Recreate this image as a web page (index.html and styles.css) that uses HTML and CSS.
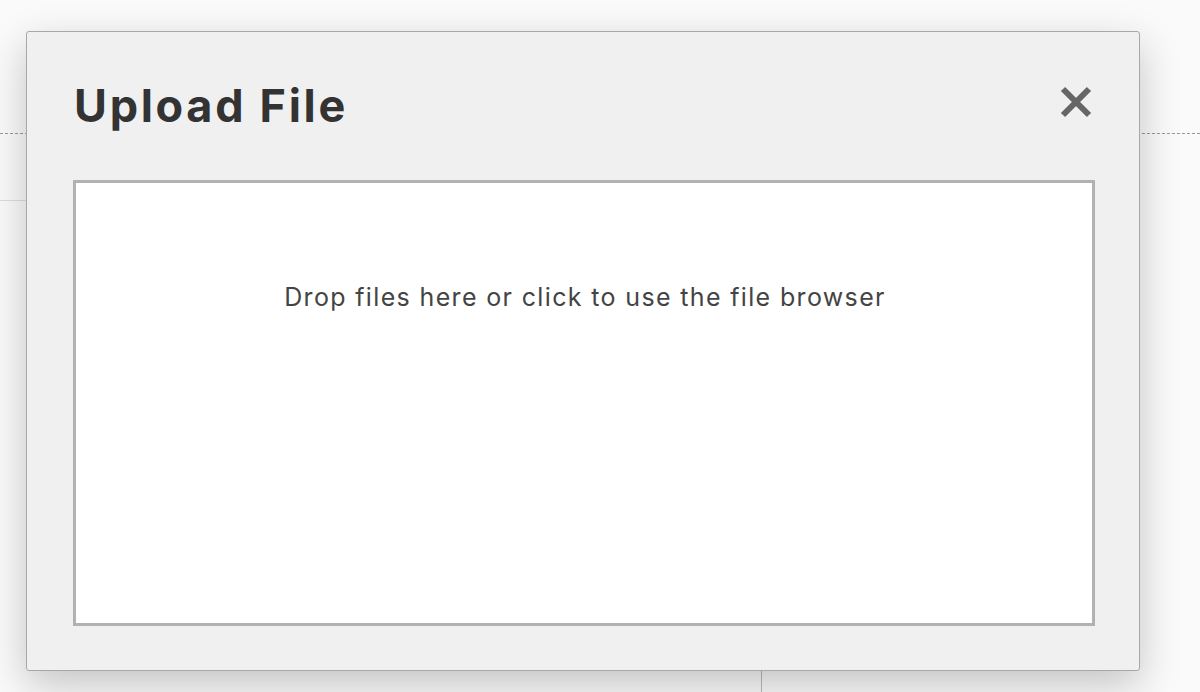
FILE: index.html
```html
<!DOCTYPE html>
<html>
<head>
<meta charset="utf-8">
<link rel="stylesheet" href="styles.css">
</head>
<body>
<div class="page">
  <div class="page-header"></div>
  <div class="page-toolbar"></div>
  <div class="page-columns">
    <div class="col-left"></div>
    <div class="col-right"></div>
  </div>
</div>
<div class="modal">
  <div class="modal-header">
    <h1 class="modal-title">Upload File</h1>
    <button class="modal-close" aria-label="Close">
      <svg width="34" height="34" viewBox="0 0 34 34"><path d="M4 4 L30 30 M30 4 L4 30" stroke="#666" stroke-width="6" stroke-linecap="butt" fill="none"/></svg>
    </button>
  </div>
  <div class="dropzone">
    <p class="dropzone-text">Drop files here or click to use the file browser</p>
  </div>
</div>
</body>
</html>
```

FILE: styles.css
```css
html, body {
  margin: 0;
  padding: 0;
}
body {
  background: #fafafa;
  width: 1200px;
  height: 692px;
  overflow: hidden;
  font-family: Inter, "Liberation Sans", sans-serif;
  position: relative;
}
.page-header {
  height: 134px;
  border-bottom: 1px dashed #999;
  box-sizing: border-box;
}
.page-toolbar {
  height: 67px;
  width: 700px;
  border-bottom: 1px solid #ddd;
  box-sizing: border-box;
}
.page-columns {
  display: flex;
  height: 491px;
}
.col-left {
  width: 762px;
  border-right: 1px solid #bbb;
  box-sizing: border-box;
}
.col-right {
  flex: 1;
}
.modal {
  position: absolute;
  left: 26px;
  top: 31px;
  width: 1114px;
  height: 640px;
  box-sizing: border-box;
  background: #f0f0f0;
  border: 1px solid #a8a8a8;
  border-radius: 3px;
  box-shadow: 0 14px 40px rgba(0,0,0,0.22);
  padding: 0 44px 44px 46px;
  display: flex;
  flex-direction: column;
}
.modal-header {
  height: 148px;
  display: flex;
  justify-content: space-between;
  align-items: flex-start;
}
.modal-title {
  margin: 48px 0 0 1px;
  font-size: 45px;
  line-height: 52px;
  font-weight: 700;
  color: #333;
  letter-spacing: 2.7px;
}
.modal-close {
  margin: 53px 2px 0 0;
  padding: 0;
  border: 0;
  background: none;
  width: 34px;
  height: 34px;
  display: block;
}
.modal-close svg {
  display: block;
}
.dropzone {
  flex: 1;
  background: #fff;
  border: 3px solid #b2b2b2;
  display: flex;
  justify-content: center;
  align-items: flex-start;
}
.dropzone-text {
  margin: 99px 0 0 2px;
  font-size: 25px;
  line-height: 30px;
  color: #444;
  letter-spacing: 1.35px;
}
```
